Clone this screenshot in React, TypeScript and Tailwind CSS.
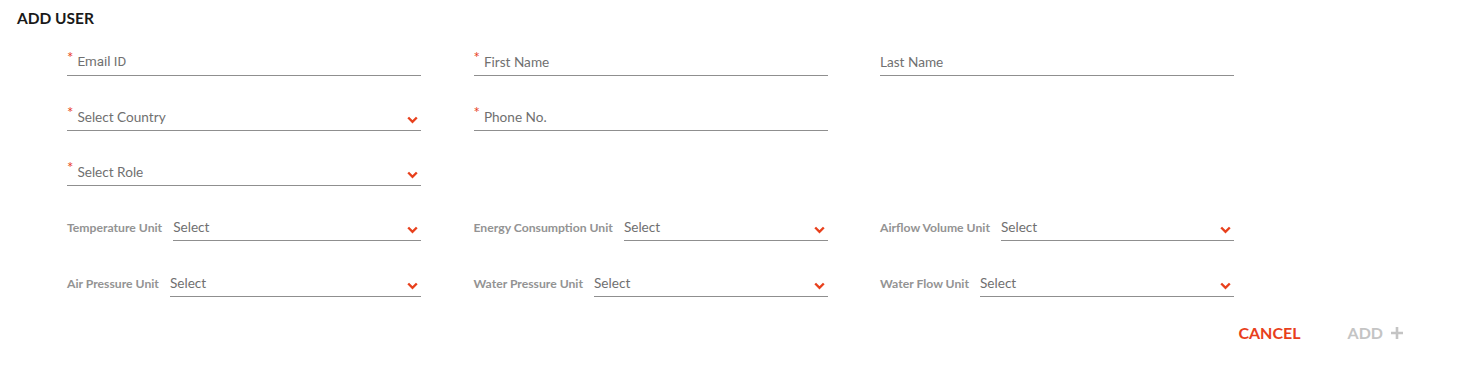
import React from "react";

const Chevron = () => (
  <svg width="11" height="8" viewBox="0 0 11 8" className="shrink-0">
    <path d="M1.2 1.5 L5.5 5.8 L9.8 1.5" fill="none" stroke="#e8401c" strokeWidth="2.4" />
  </svg>
);

const Star = () => (
  <span className="text-[#e8401c] text-[15px] leading-none relative -top-[5px] mr-[4px]">*</span>
);

function Field({ label, required, select, roboto }: { label: string; required?: boolean; select?: boolean; roboto?: boolean }) {
  return (
    <div className="w-[354px] h-[30px] border-b border-[#8f8f8f] flex items-end pb-[5px]">
      <div className="flex items-center flex-1">
        {required ? <Star /> : null}
        <span
          className="text-[13.6px] leading-[16px] text-[#707070]"
          style={roboto ? { fontFamily: "Roboto, sans-serif", fontSize: "13.4px" } : undefined}
        >
          {label}
        </span>
      </div>
      {select ? (
        <div className="pb-[1px] pr-[3px]">
          <Chevron />
        </div>
      ) : null}
    </div>
  );
}

function UnitField({ label }: { label: string }) {
  return (
    <div className="w-[354px] h-[30px] flex items-end">
      <span className="text-[12.2px] font-bold text-[#939393] leading-[16px] pb-[5px] mr-[11px] whitespace-nowrap">
        {label}
      </span>
      <div className="flex-1 h-[30px] border-b border-[#8f8f8f] flex items-end pb-[5px]">
        <span className="flex-1 text-[13.6px] leading-[16px] text-[#707070]">Select</span>
        <div className="pb-[1px] pr-[3px]">
          <Chevron />
        </div>
      </div>
    </div>
  );
}

export default function App() {
  return (
    <div className="w-[1460px] h-[370px] bg-white" style={{ fontFamily: "Lato, 'Open Sans', sans-serif" }}>
      <div className="pl-[17px] pt-[9px] text-[15.5px] font-bold leading-[18px] text-[#1a1a1a]">ADD USER</div>
      <div className="pl-[67px] pt-[19px] flex flex-col gap-[25px]">
        <div className="flex gap-[52.5px]">
          <Field label="Email ID" required roboto />
          <Field label="First Name" required />
          <Field label="Last Name" />
        </div>
        <div className="flex gap-[52.5px]">
          <Field label="Select Country" required select />
          <Field label="Phone No." required />
        </div>
        <div className="flex gap-[52.5px]">
          <Field label="Select Role" required select />
        </div>
        <div className="flex gap-[52.5px]">
          <UnitField label="Temperature Unit" />
          <UnitField label="Energy Consumption Unit" />
          <UnitField label="Airflow Volume Unit" />
        </div>
        <div className="flex gap-[52.5px] mt-[1px]">
          <UnitField label="Air Pressure Unit" />
          <UnitField label="Water Pressure Unit" />
          <UnitField label="Water Flow Unit" />
        </div>
      </div>
      <div className="flex justify-end items-center pr-[56px] pt-[27px] gap-[47px]">
        <button className="text-[16px] font-bold text-[#e8401c] leading-[18px]">CANCEL</button>
        <button className="flex items-center gap-[7px] text-[16px] font-bold text-[#c4c4c4] leading-[18px]">
          ADD
          <svg width="14" height="14" viewBox="0 0 14 14">
            <path d="M7 1 V13 M1 7 H13" stroke="#c4c4c4" strokeWidth="2.6" />
          </svg>
        </button>
      </div>
    </div>
  );
}
